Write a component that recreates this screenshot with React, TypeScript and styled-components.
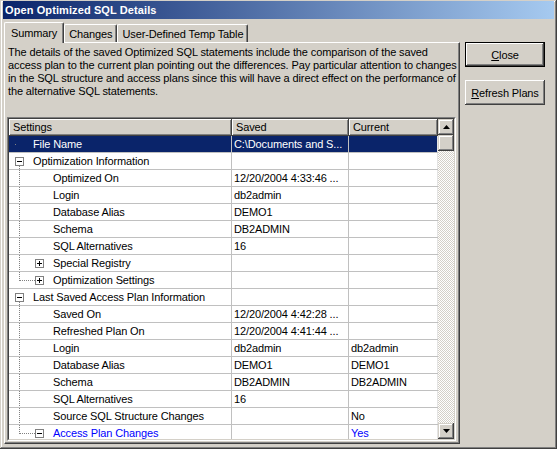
import React from "react";
import styled, { createGlobalStyle } from "styled-components";

const GlobalStyle = createGlobalStyle`
  html, body { margin: 0; padding: 0; background: #d4d0c8; }
  body { font-family: "Liberation Sans", Arial, sans-serif; font-size: 11px; color: #000; letter-spacing: -0.12px; }
  * { box-sizing: border-box; }
`;

const Window = styled.div`
  width: 557px;
  height: 449px;
  padding: 1px 3px 3px 3px;
  background: #d4d0c8;
  box-shadow: inset -1px -1px #404040, inset 1px 1px #d4d0c8, inset -2px -2px #808080, inset 2px 2px #fff;
  display: flex;
  flex-direction: column;
  overflow: hidden;
`;

const TitleBar = styled.div`
  height: 18px;
  flex: none;
  background: linear-gradient(to right, #0a246a, #a6caf0);
  color: #fff;
  font-weight: bold;
  font-size: 11px;
  letter-spacing: 0.1px;
  display: flex;
  align-items: center;
  padding-left: 2px;
  white-space: nowrap;
`;

const Body = styled.div`
  display: flex;
  padding: 3px 0 0 1px;
`;

const TabControl = styled.div`
  width: 456px;
  display: flex;
  flex-direction: column;
`;

const TabStrip = styled.div`
  display: flex;
  align-items: flex-end;
  height: 20px;
`;

const Tab = styled.div<{ $active?: boolean }>`
  position: relative;
  z-index: ${(p) => (p.$active ? 2 : 1)};
  height: ${(p) => (p.$active ? "21px" : "18px")};
  margin-bottom: ${(p) => (p.$active ? "-1px" : "0")};
  padding: 0 ${(p) => (p.$active ? "6px 0 6px" : "4px 0 4px")};
  background: #d4d0c8;
  border-top: 1px solid #fff;
  border-left: 1px solid #fff;
  border-right: 1px solid #404040;
  box-shadow: inset -1px 0 #808080;
  border-radius: 2px 2px 0 0;
  display: flex;
  align-items: center;
  white-space: nowrap;
`;

const Panel = styled.div`
  height: 402px;
  border-top: 1px solid #fff;
  border-left: 1px solid #fff;
  border-right: 1px solid #404040;
  border-bottom: 1px solid #404040;
  box-shadow: inset -1px -1px #808080;
  padding: 3px 3px 0 2px;
  display: flex;
  flex-direction: column;
`;

const Description = styled.div`
  line-height: 13px;
  white-space: nowrap;
  padding-left: 1px;
`;

const GridOuter = styled.div`
  margin-top: 19px;
  width: 449px;
  height: 324px;
  border-top: 1px solid #808080;
  border-left: 1px solid #808080;
  border-right: 1px solid #fff;
  border-bottom: 1px solid #fff;
`;

const GridInner = styled.div`
  height: 100%;
  border-top: 1px solid #404040;
  border-left: 1px solid #404040;
  border-right: 1px solid #d4d0c8;
  border-bottom: 1px solid #d4d0c8;
  background: #fff;
  display: flex;
`;

const TableArea = styled.div`
  flex: 1;
  overflow: hidden;
  display: flex;
  flex-direction: column;
`;

const columns = "223px 117px 89px";

const HeaderRow = styled.div`
  display: grid;
  grid-template-columns: ${columns};
  height: 17px;
  flex: none;
`;

const HeaderCell = styled.div`
  background: #d4d0c8;
  border-right: 1px solid #404040;
  border-bottom: 1px solid #404040;
  box-shadow: inset 1px 1px #fff, inset -1px -1px #808080;
  padding-left: 4px;
  display: flex;
  align-items: center;
  white-space: nowrap;
`;

const Row = styled.div<{ $selected?: boolean; $blue?: boolean }>`
  display: grid;
  grid-template-columns: ${columns};
  height: 17px;
  flex: none;
  border-bottom: 1px solid #c0c0c0;
  background: ${(p) => (p.$selected ? "#0a246a" : "#fff")};
  color: ${(p) => (p.$selected ? "#fff" : p.$blue ? "#0000ff" : "#000")};
`;

const Cell = styled.div<{ $faint?: boolean }>`
  border-right: 1px solid ${(p) => (p.$faint ? "#e4e4e4" : "#c0c0c0")};
  padding-left: 2px;
  display: flex;
  align-items: center;
  white-space: nowrap;
  overflow: hidden;
`;

const SettingsCell = styled(Cell)`
  padding-left: 0;
`;

const ScrollBar = styled.div`
  width: 16px;
  flex: none;
  display: flex;
  flex-direction: column;
`;

const bevel = `
  background: #d4d0c8;
  box-shadow: inset -1px -1px #404040, inset 1px 1px #d4d0c8, inset -2px -2px #808080, inset 2px 2px #fff;
`;

const ScrollButton = styled.div`
  height: 16px;
  flex: none;
  ${bevel}
  display: flex;
  align-items: center;
  justify-content: center;
`;

const Thumb = styled.div`
  height: 16px;
  flex: none;
  ${bevel}
`;

const Track = styled.div`
  flex: 1;
  background: repeating-conic-gradient(#d4d0c8 0 25%, #fff 0 50%) 0 0 / 2px 2px;
`;

const RightColumn = styled.div`
  display: flex;
  flex-direction: column;
  margin-left: 5px;
  padding-top: 20px;
  gap: 13px;
`;

const Button = styled.button<{ $default?: boolean }>`
  width: 80px;
  height: 25px;
  padding: 0;
  font: 11px "Liberation Sans", Arial, sans-serif;
  letter-spacing: -0.12px;
  color: #000;
  background: #d4d0c8;
  border: ${(p) => (p.$default ? "1px solid #000" : "none")};
  box-shadow: ${(p) =>
    p.$default
      ? "inset -1px -1px #404040, inset 1px 1px #fff, inset -2px -2px #808080"
      : "inset -1px -1px #404040, inset 1px 1px #fff, inset -2px -2px #808080, inset 2px 2px #d4d0c8"};
`;

type Tree = "rootLeaf" | "rootOpen" | "mid" | "last";
type Exp = "plus" | "minus" | undefined;

interface RowData {
  label: string;
  level: 0 | 1;
  tree: Tree;
  exp?: Exp;
  saved?: string;
  current?: string;
  selected?: boolean;
  blue?: boolean;
}

const rows: RowData[] = [
  { label: "File Name", level: 0, tree: "rootLeaf", saved: "C:\\Documents and S...", selected: true },
  { label: "Optimization Information", level: 0, tree: "rootOpen", exp: "minus" },
  { label: "Optimized On", level: 1, tree: "mid", saved: "12/20/2004 4:33:46 ..." },
  { label: "Login", level: 1, tree: "mid", saved: "db2admin" },
  { label: "Database Alias", level: 1, tree: "mid", saved: "DEMO1" },
  { label: "Schema", level: 1, tree: "mid", saved: "DB2ADMIN" },
  { label: "SQL Alternatives", level: 1, tree: "mid", saved: "16" },
  { label: "Special Registry", level: 1, tree: "mid", exp: "plus" },
  { label: "Optimization Settings", level: 1, tree: "last", exp: "plus" },
  { label: "Last Saved Access Plan Information", level: 0, tree: "rootOpen", exp: "minus" },
  { label: "Saved On", level: 1, tree: "mid", saved: "12/20/2004 4:42:28 ..." },
  { label: "Refreshed Plan On", level: 1, tree: "mid", saved: "12/20/2004 4:41:44 ..." },
  { label: "Login", level: 1, tree: "mid", saved: "db2admin", current: "db2admin" },
  { label: "Database Alias", level: 1, tree: "mid", saved: "DEMO1", current: "DEMO1" },
  { label: "Schema", level: 1, tree: "mid", saved: "DB2ADMIN", current: "DB2ADMIN" },
  { label: "SQL Alternatives", level: 1, tree: "mid", saved: "16" },
  { label: "Source SQL Structure Changes", level: 1, tree: "mid", current: "No" },
  { label: "Access Plan Changes", level: 1, tree: "last", exp: "minus", current: "Yes", blue: true },
];

const Expander: React.FC<{ x: number; kind: "plus" | "minus" }> = ({ x, kind }) => (
  <g shapeRendering="crispEdges">
    <rect x={x + 0.5} y={4.5} width={8} height={8} fill="#fff" stroke="#808080" />
    <line x1={x + 2} y1={8.5} x2={x + 7} y2={8.5} stroke="#000" />
    {kind === "plus" && <line x1={x + 4.5} y1={6} x2={x + 4.5} y2={11} stroke="#000" />}
  </g>
);

const TreeGutter: React.FC<{ row: RowData }> = ({ row }) => {
  const w = row.level === 0 ? 24 : 44;
  const dot = { stroke: "#808080", strokeDasharray: "1 1", shapeRendering: "crispEdges" as const };
  return (
    <svg width={w} height={16} style={{ flex: "none", display: "block" }}>
      {row.tree === "rootLeaf" && <rect x={6} y={8} width={1} height={1} fill="#808080" />}
      {row.tree === "rootOpen" && <line x1={10.5} y1={13} x2={10.5} y2={16} {...dot} />}
      {row.tree === "mid" && <line x1={10.5} y1={0} x2={10.5} y2={16} {...dot} />}
      {row.tree === "last" && (
        <>
          <line x1={10.5} y1={0} x2={10.5} y2={9} {...dot} />
          <line x1={11} y1={8.5} x2={26} y2={8.5} {...dot} />
        </>
      )}
      {row.exp && <Expander x={row.level === 0 ? 6 : 26} kind={row.exp} />}
    </svg>
  );
};

const Arrow: React.FC<{ up?: boolean }> = ({ up }) => (
  <svg width={7} height={4} style={{ display: "block" }}>
    <polygon points={up ? "3.5,0 7,4 0,4" : "0,0 7,0 3.5,4"} fill="#000" />
  </svg>
);

export default function App() {
  return (
    <>
      <GlobalStyle />
      <Window>
        <TitleBar>Open Optimized SQL Details</TitleBar>
        <Body>
          <TabControl>
            <TabStrip>
              <Tab $active>Summary</Tab>
              <Tab>Changes</Tab>
              <Tab>User-Defined Temp Table</Tab>
            </TabStrip>
            <Panel>
              <Description>
                The details of the saved Optimized SQL statements include the comparison of the saved
                <br />
                access plan to the current plan pointing out the differences. Pay particular attention to changes
                <br />
                in the SQL structure and access plans since this will have a direct effect on the performance of
                <br />
                the alternative SQL statements.
              </Description>
              <GridOuter>
                <GridInner>
                  <TableArea>
                    <HeaderRow>
                      <HeaderCell>Settings</HeaderCell>
                      <HeaderCell>Saved</HeaderCell>
                      <HeaderCell>Current</HeaderCell>
                    </HeaderRow>
                    {rows.map((r, i) => (
                      <Row key={i} $selected={r.selected} $blue={r.blue}>
                        <SettingsCell>
                          <TreeGutter row={r} />
                          {r.label}
                        </SettingsCell>
                        <Cell>{r.saved ?? ""}</Cell>
                        <Cell $faint>{r.current ?? ""}</Cell>
                      </Row>
                    ))}
                  </TableArea>
                  <ScrollBar>
                    <ScrollButton>
                      <Arrow up />
                    </ScrollButton>
                    <Thumb />
                    <Track />
                    <ScrollButton>
                      <Arrow />
                    </ScrollButton>
                  </ScrollBar>
                </GridInner>
              </GridOuter>
            </Panel>
          </TabControl>
          <RightColumn>
            <Button $default>
              <u>C</u>lose
            </Button>
            <Button>
              <u>R</u>efresh Plans
            </Button>
          </RightColumn>
        </Body>
      </Window>
    </>
  );
}
